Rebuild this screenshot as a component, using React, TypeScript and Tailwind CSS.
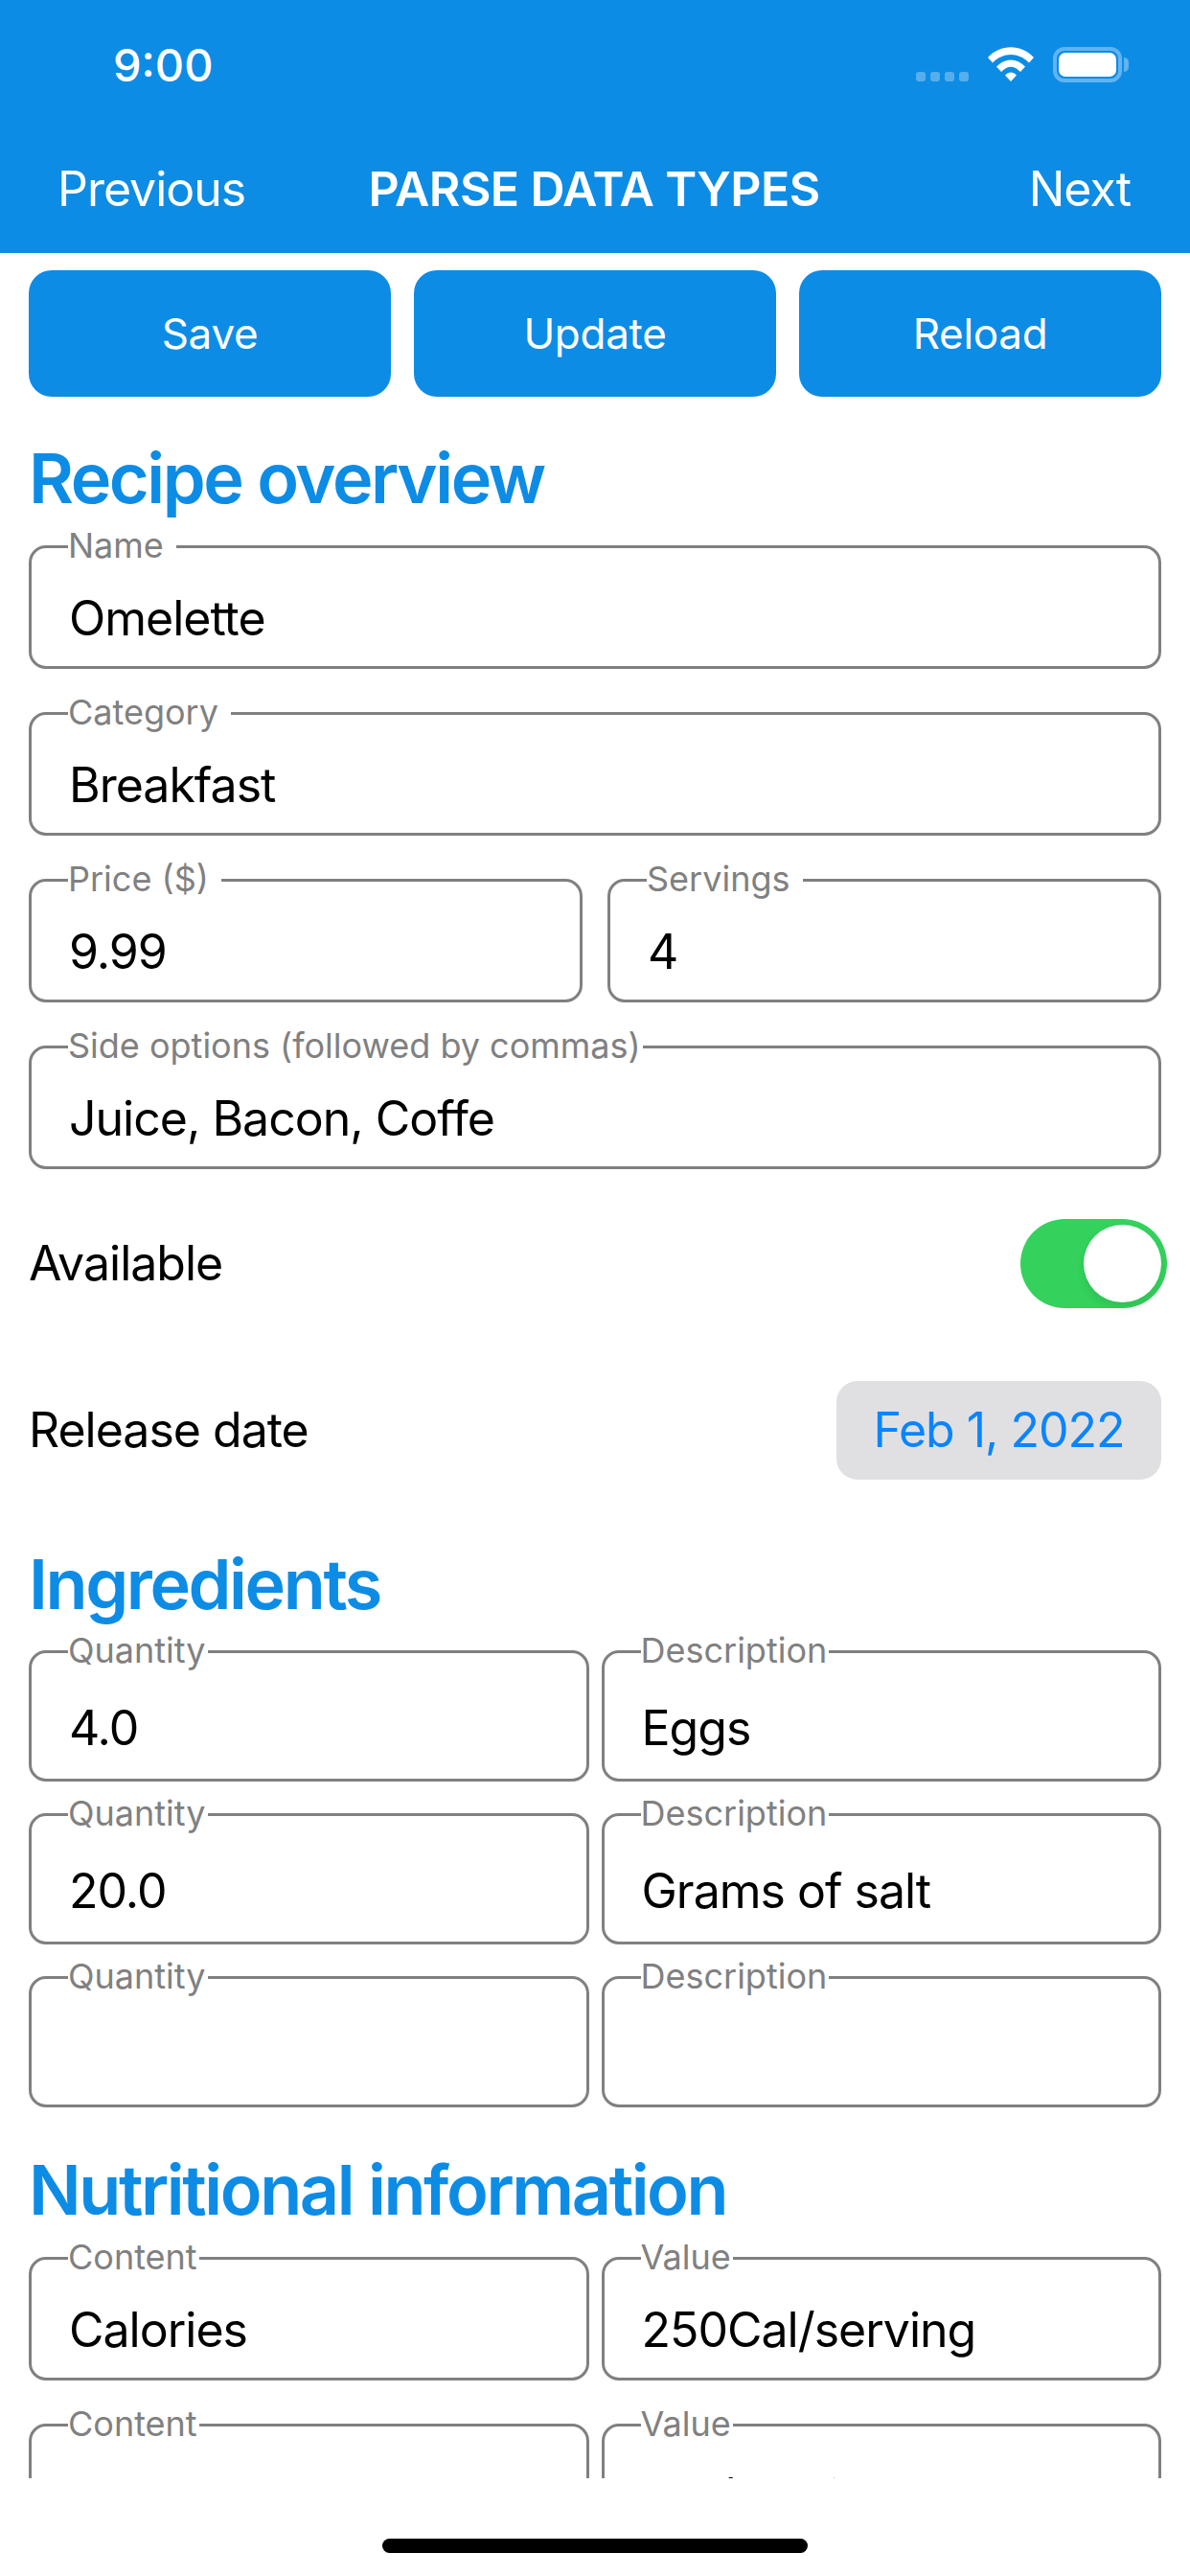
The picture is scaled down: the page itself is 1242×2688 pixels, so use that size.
const font = 'font-["Inter","Liberation_Sans",sans-serif]';

function Field({ label, value, gap = 'pr-[2px]', className = 'h-[129px]' }: { label: string; value?: string; gap?: string; className?: string }) {
  return (
    <div className={`relative min-w-0 border-[3px] border-[#808080] rounded-[18px] ${className}`}>
      <span className={`absolute left-[38px] top-[-25px] bg-white text-[36px] leading-[44px] text-[#808080] ${gap}`}>{label}</span>
      {value && <div className="pl-[39px] pt-[43px] text-[50px] leading-[60px] tracking-[-1px] text-black">{value}</div>}
    </div>
  );
}

function SectionTitle({ children, className }: { children: string; className?: string }) {
  return <h2 className={`text-[72px] leading-[86px] font-semibold tracking-[-2.4px] text-[#0d8ce6] ${className}`}>{children}</h2>;
}

function StatusBar() {
  return (
    <div className="flex items-start justify-between h-[120px] pl-[118px] pr-[71px] pt-[39px]">
      <span className="text-[47px] leading-[57px] font-medium text-white">9:00</span>
      <div className="flex items-start pt-[10px]">
        <div className="flex gap-[5px] mt-[26px] mr-[20px]">
          {[0, 1, 2, 3].map((i) => (
            <div key={i} className="w-[10px] h-[10px] rounded-[3px] bg-white/30" />
          ))}
        </div>
        <svg width="48" height="36" viewBox="0 0 48 36" className="mr-[20px]" fill="white">
          <path d="M0 11 C13 -3.5 35 -3.5 48 11 L43 16.5 C32 5 16 5 5 16.5 Z" />
          <path d="M9 20.5 C18 11 30 11 39 20.5 L34 26 C27 19 21 19 14 26 Z" />
          <path d="M18 29.5 C22 25.5 26 25.5 30 29.5 L24 36 Z" />
        </svg>
        <div className="relative w-[72px] h-[37px] border-[4px] border-white/35 rounded-[12px] p-[2px]">
          <div className="w-full h-full bg-white rounded-[7px]" />
          <div className="absolute right-[-11px] top-[7px] w-[5px] h-[15px] bg-white/35 rounded-r-[5px]" />
        </div>
      </div>
    </div>
  );
}

export default function App() {
  return (
    <div className={`w-[1242px] h-[2688px] flex flex-col bg-white overflow-hidden ${font}`}>
      <header className="bg-[#0d8ce6] h-[264px] shrink-0">
        <StatusBar />
        <div className="flex items-center h-[144px] pl-[60px] pr-[62px] pt-[10px] text-[50px] tracking-[-1px] text-white">
          <span className="flex-1">Previous</span>
          <span className="font-semibold tracking-[-0.6px]">PARSE DATA TYPES</span>
          <span className="flex-1 text-right">Next</span>
        </div>
      </header>

      <main className="h-[2322px] shrink-0 overflow-hidden px-[30px] pt-[18px]">
        <div className="flex gap-[24px]">
          {['Save', 'Update', 'Reload'].map((b) => (
            <div key={b} className="flex-1 h-[132px] rounded-[24px] bg-[#0d8ce6] text-white text-[44px] tracking-[-0.3px] flex items-center justify-center">
              {b}
            </div>
          ))}
        </div>

        <SectionTitle className="mt-[42px] mb-[27px]">Recipe overview</SectionTitle>

        <div className="flex flex-col gap-[45px]">
          <Field label="Name" value="Omelette" gap="pr-[13px]" />
          <Field label="Category" value="Breakfast" gap="pr-[13px]" />
          <div className="grid grid-cols-2 gap-[26px]">
            <Field label="Price ($)" value="9.99" gap="pr-[13px]" />
            <Field label="Servings" value="4" gap="pr-[13px]" />
          </div>
          <Field label="Side options (followed by commas)" value="Juice, Bacon, Coffe" />
        </div>

        <div className="flex items-center justify-between h-[93px] mt-[52px] text-[50px] tracking-[-1px] text-black">
          <span>Available</span>
          <div className="relative w-[153px] h-[93px] rounded-full bg-[#34d15c] mr-[-6px]">
            <div className="absolute right-[6px] top-[6px] w-[81px] h-[81px] rounded-full bg-white shadow-[0_6px_10px_rgba(0,0,0,0.08)]" />
          </div>
        </div>

        <div className="flex items-center justify-between h-[103px] mt-[76px] text-[50px] tracking-[-1px] text-black">
          <span>Release date</span>
          <div className="w-[339px] h-[103px] rounded-[22px] bg-[#e0e0e3] text-[#0a84ff] flex items-center justify-center">Feb 1, 2022</div>
        </div>

        <SectionTitle className="mt-[66px] mb-[26px]">Ingredients</SectionTitle>

        <div className="flex flex-col gap-[33px]">
          {[['4.0', 'Eggs'], ['20.0', 'Grams of salt'], ['', '']].map(([q, d], i) => (
            <div key={i} className="grid grid-cols-2 gap-[13px]">
              <Field label="Quantity" value={q} className="h-[137px] pt-[5px]" />
              <Field label="Description" value={d} className="h-[137px] pt-[5px]" />
            </div>
          ))}
        </div>

        <SectionTitle className="mt-[43px] mb-[27px]">Nutritional information</SectionTitle>

        <div className="flex flex-col gap-[45px]">
          <div className="grid grid-cols-2 gap-[13px]">
            <Field label="Content" value="Calories" />
            <Field label="Value" value="250Cal/serving" />
          </div>
          <div className="grid grid-cols-2 gap-[13px]">
            <Field label="Content" />
            <Field label="Value" value="12g/serving" />
          </div>
        </div>
      </main>

      <div className="flex-1 flex justify-center pt-[63px]">
        <div className="w-[444px] h-[15px] rounded-[8px] bg-black" />
      </div>
    </div>
  );
}
